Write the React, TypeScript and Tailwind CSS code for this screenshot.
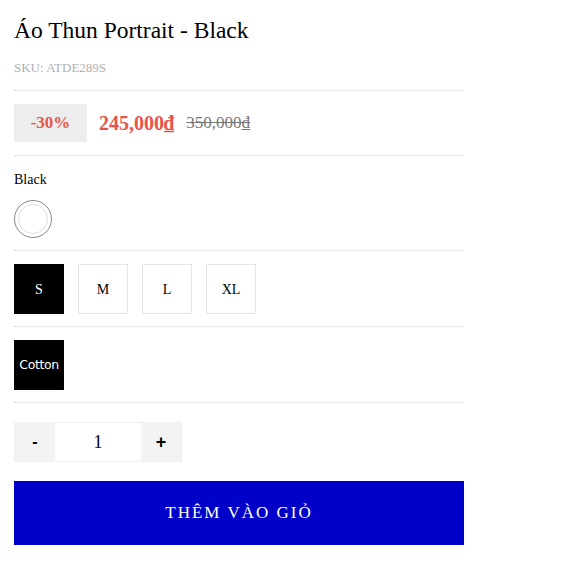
import { FC, ReactNode } from 'react';

const serif = "font-['Liberation_Serif','DejaVu_Serif',serif]";

const App: FC = (): ReactNode => {
  return (
    <div className={`w-[570px] h-[570px] bg-white ${serif}`}>
      <div className="flex w-[450px] flex-col ml-[14px] pt-[14px]">
        <div className="text-[23.5px] leading-[32px] text-black">Áo Thun Portrait - Black</div>
        <div className="mt-[14px] text-[13px] leading-[16px] font-normal text-[#b0b0b0]">SKU: ATDE289S</div>
        <div className="mt-[14px] border-b border-dotted border-[#d6d6d6]" />

        <div className="flex items-center gap-3 py-[13px]">
          <div className="flex h-[38px] w-[73px] items-center justify-center bg-[#ededed] text-[17px] font-bold text-[#e8544a]">
            -30%
          </div>
          <div className="text-[20px] font-bold text-[#e8544a]">245,000₫</div>
          <div className="text-[17px] text-[#777777] line-through">350,000₫</div>
        </div>
        <div className="border-b border-dotted border-[#d6d6d6]" />

        <div className="flex flex-col pt-[16px] pb-[12px]">
          <div className="text-[14px] leading-[16px] text-black">Black</div>
          <div className="mt-[12px] flex h-[38px] w-[38px] items-center justify-center rounded-full border border-[#888888]">
            <div className="h-[30px] w-[30px] rounded-full border border-[#dddddd]" />
          </div>
        </div>
        <div className="border-b border-dotted border-[#d6d6d6]" />

        <div className="flex gap-[14px] pt-[13px] pb-[12px]">
          <div className="flex h-[50px] w-[50px] items-center justify-center bg-black text-[14px] text-white">S</div>
          {['M', 'L', 'XL'].map((s) => (
            <div
              key={s}
              className="flex h-[50px] w-[50px] items-center justify-center border border-[#e5e5e5] text-[14px] text-black"
            >
              {s}
            </div>
          ))}
        </div>
        <div className="border-b border-dotted border-[#d6d6d6]" />

        <div className="flex pt-[13px] pb-[12px]">
          <div className="flex h-[50px] w-[50px] items-center justify-center bg-black font-['DejaVu_Sans',sans-serif] text-[12.5px] tracking-[-0.4px] text-white">
            Cotton
          </div>
        </div>
        <div className="border-b border-dotted border-[#d6d6d6]" />

        <div className="mt-[19px] flex h-[40px] w-[168px] border border-[#f0f0f0]">
          <div className="flex w-[40px] items-center justify-center bg-[#f3f3f3] font-['Liberation_Sans',sans-serif] text-[16px] font-bold text-black">
            -
          </div>
          <div className="flex flex-1 items-center justify-center bg-white text-[18px] text-black">1</div>
          <div className="flex w-[40px] items-center justify-center bg-[#f3f3f3] font-['Liberation_Sans',sans-serif] text-[18px] font-bold text-black">
            +
          </div>
        </div>

        <div className="mt-[19px] flex h-[64px] items-center justify-center bg-[#0000c8] text-[17px] tracking-[2px] text-white">
          THÊM VÀO GIỎ
        </div>
      </div>
    </div>
  );
};

export default App;
